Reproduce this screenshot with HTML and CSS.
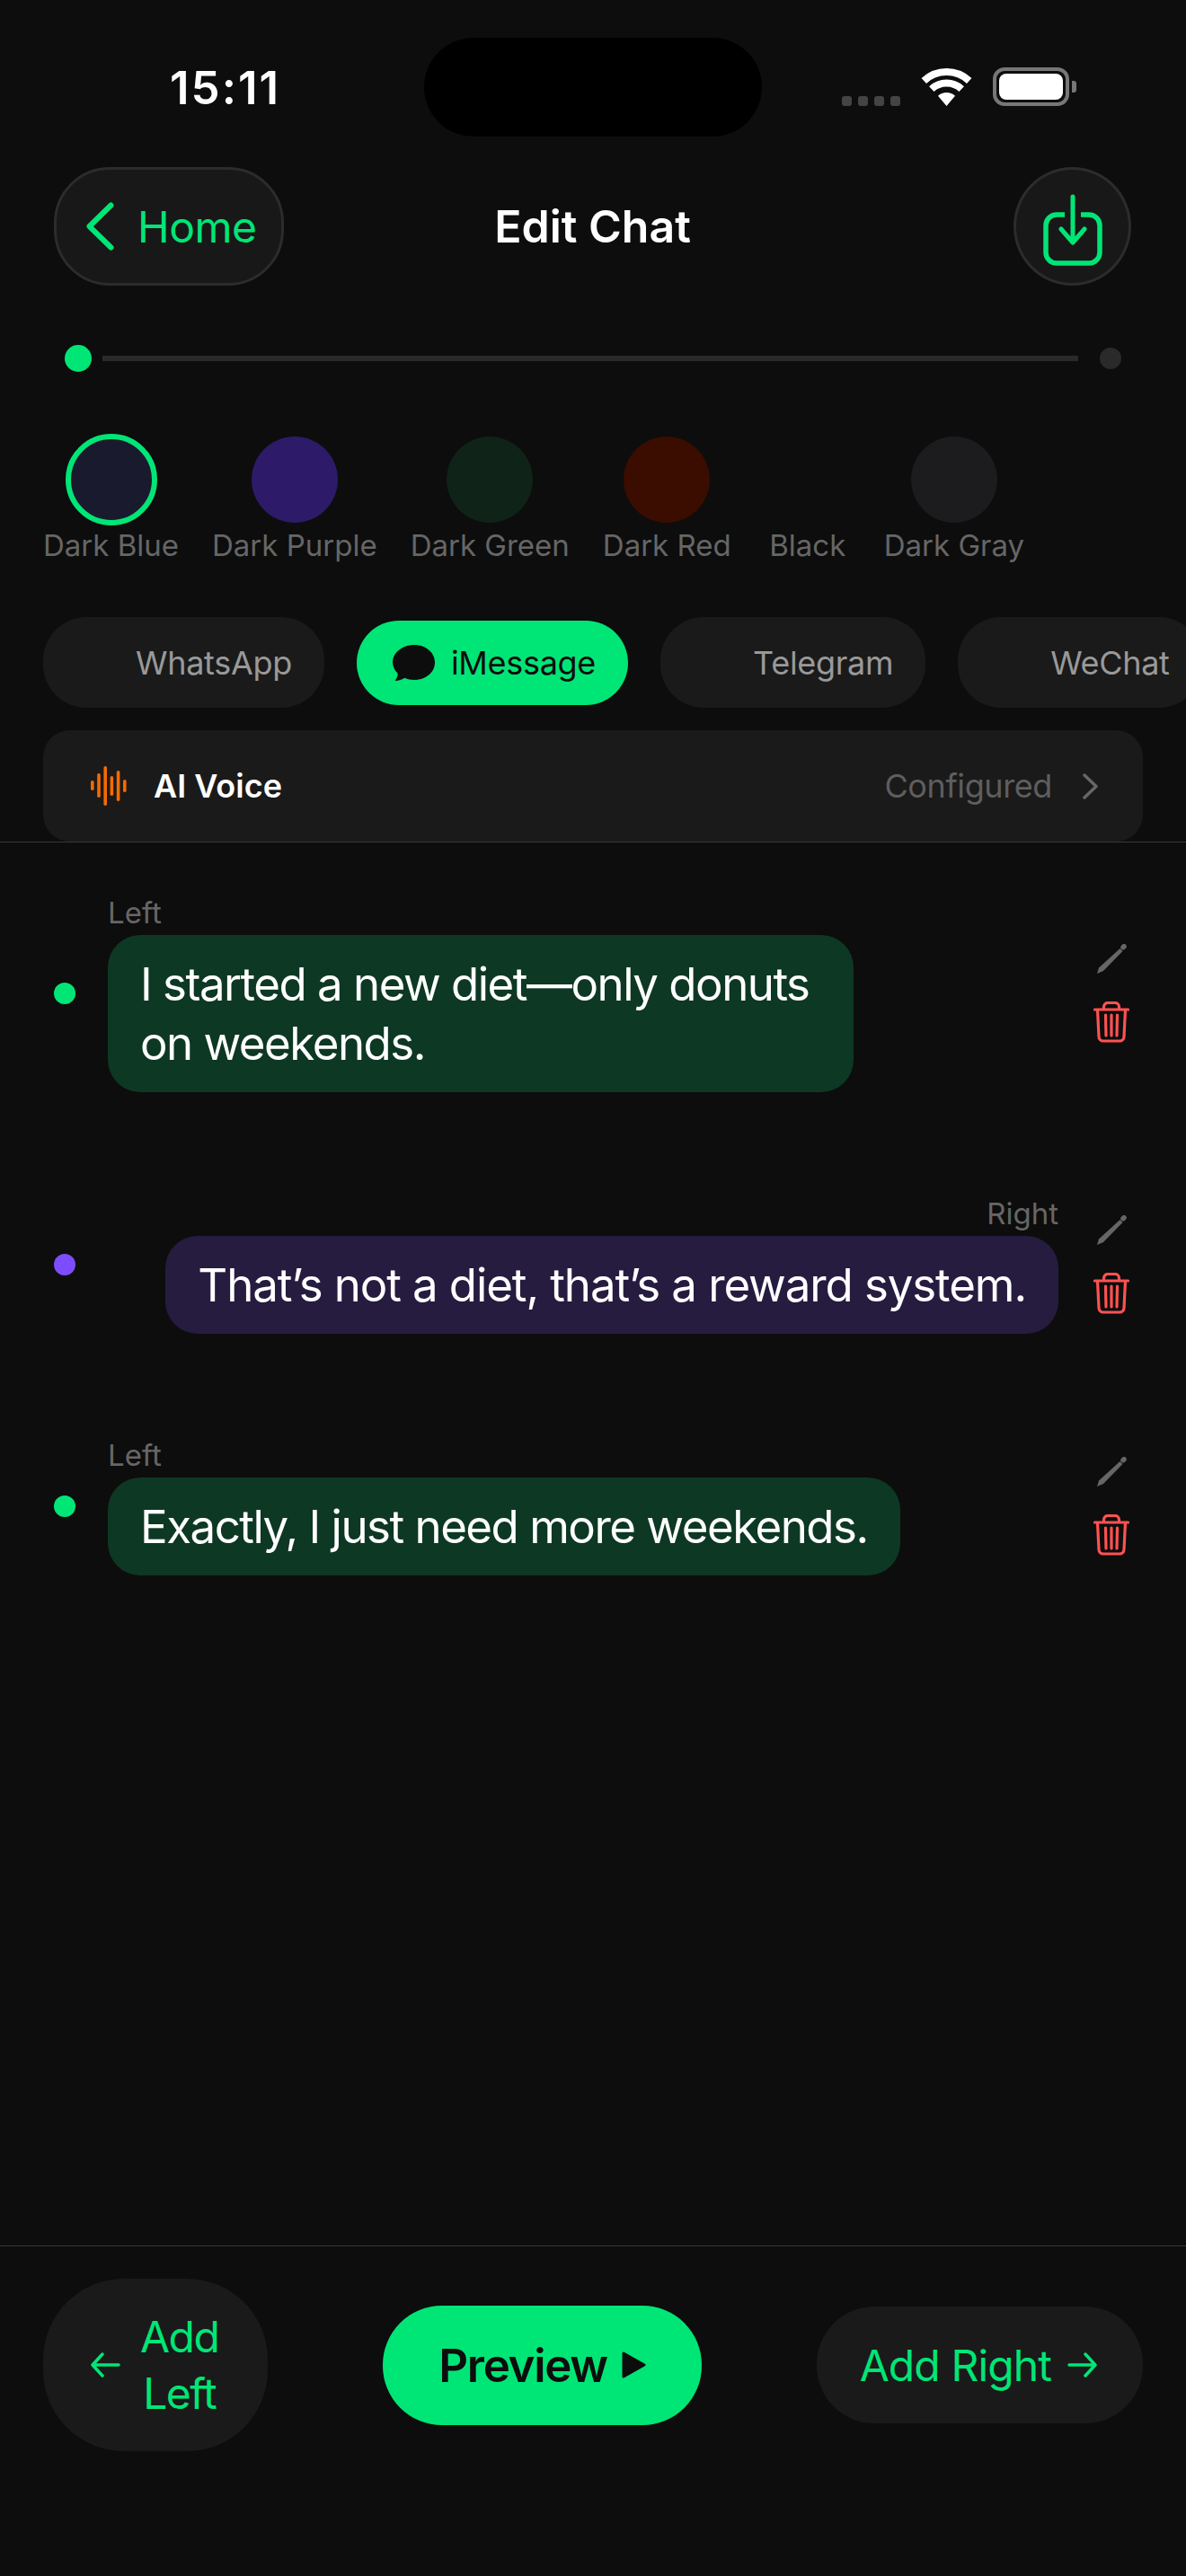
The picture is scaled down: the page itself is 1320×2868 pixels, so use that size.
FILE: index.html
```html
<!DOCTYPE HTML>
<html lang="en">
<head>
    <meta charset="UTF-8">
    <meta name="viewport" content="width=device-width, initial-scale=1.0">
    <title>Edit Chat</title>
    <link rel="stylesheet" href="styles.css">
</head>
<body>
<div class="page">
    <div class="island"></div>

    <div class="status">
        <span class="time">15:11</span>
        <div class="status-icons">
            <div class="signal"><i></i><i></i><i></i><i></i></div>
            <svg class="wifi" width="57" height="42" viewBox="0 0 57 42">
                <path d="M3.3 14 A37 37 0 0 1 53.7 14" fill="none" stroke="#fff" stroke-width="8"/>
                <path d="M11.8 23.1 A24.5 24.5 0 0 1 45.2 23.1" fill="none" stroke="#fff" stroke-width="8"/>
                <path d="M28.5 42 L19 30.8 A14 14 0 0 1 38 30.8 Z" fill="#fff"/>
            </svg>
            <div class="battery"><div class="battery-fill"></div></div>
            <div class="battery-cap"></div>
        </div>
    </div>

    <div class="header">
        <div class="home-btn">
            <svg width="32" height="54" viewBox="0 0 32 54">
                <path d="M27.5 3.5 L3.5 27 L27.5 50.5" fill="none" stroke="#00e676" stroke-width="6" stroke-linecap="round" stroke-linejoin="round"/>
            </svg>
            <span>Home</span>
        </div>
        <div class="title">Edit Chat</div>
        <div class="save-btn">
            <svg width="72" height="92" viewBox="0 -8 72 92">
                <path d="M27 25 H18 a12 12 0 0 0 -12 12 V67 a12 12 0 0 0 12 12 H54 a12 12 0 0 0 12 -12 V37 a12 12 0 0 0 -12 -12 H45" fill="none" stroke="#00e676" stroke-width="5.5"/>
                <path d="M36 5 V55 M23 41 L36 56 L49 41" fill="none" stroke="#00e676" stroke-width="5" stroke-linecap="round" stroke-linejoin="round"/>
            </svg>
        </div>
    </div>

    <div class="progress">
        <div class="step-on"></div>
        <div class="track"></div>
        <div class="step-off"></div>
    </div>

    <div class="swatches">
        <div class="swatch-item">
            <div class="swatch swatch-selected swatch-blue"></div>
            <span>Dark Blue</span>
        </div>
        <div class="swatch-item">
            <div class="swatch swatch-purple"></div>
            <span>Dark Purple</span>
        </div>
        <div class="swatch-item">
            <div class="swatch swatch-green"></div>
            <span>Dark Green</span>
        </div>
        <div class="swatch-item">
            <div class="swatch swatch-red"></div>
            <span>Dark Red</span>
        </div>
        <div class="swatch-item">
            <div class="swatch swatch-black"></div>
            <span>Black</span>
        </div>
        <div class="swatch-item">
            <div class="swatch swatch-gray"></div>
            <span>Dark Gray</span>
        </div>
    </div>

    <div class="tabs">
        <div class="tab">WhatsApp</div>
        <div class="tab tab-active">
            <svg width="47" height="40" viewBox="0 0 47 40">
                <path d="M24 0 C37 0 47 8.5 47 19.5 C47 30.5 37 39 24 39 C20 39 16.5 38.2 13.5 36.8 C10.5 38.8 7 40 2.5 40 C4.8 37.5 5.8 34.5 5.6 31.6 C2.2 28.2 0 24 0 19.5 C0 8.5 11 0 24 0 Z" fill="#0d0d0d"/>
            </svg>
            <span>iMessage</span>
        </div>
        <div class="tab">Telegram</div>
        <div class="tab">WeChat</div>
    </div>

    <div class="voice-wrap">
        <div class="voice">
            <svg class="voice-icon" width="40" height="44" viewBox="0 0 40 44">
                <rect x="0" y="16" width="3.6" height="11" rx="1.8"/>
                <rect x="7.2" y="8" width="3.6" height="27" rx="1.8"/>
                <rect x="14.4" y="0" width="3.6" height="44" rx="1.8"/>
                <rect x="21.6" y="11" width="3.6" height="22" rx="1.8"/>
                <rect x="28.8" y="5" width="3.6" height="34" rx="1.8"/>
                <rect x="36" y="15" width="3.6" height="14" rx="1.8"/>
            </svg>
            <span class="voice-name">AI Voice</span>
            <span class="voice-state">Configured</span>
            <svg width="17" height="29" viewBox="0 0 17 29">
                <path d="M2 2 L15 14.5 L2 27" fill="none" stroke="#666" stroke-width="3.5" stroke-linecap="round" stroke-linejoin="round"/>
            </svg>
        </div>
    </div>

    <div class="messages">
        <div class="msg">
            <div class="dot dot-green"></div>
            <div class="msg-body">
                <div class="msg-side">Left</div>
                <div class="bubble bubble-left bubble-wrapped">I started a new diet—only donuts on weekends.</div>
            </div>
            <div class="msg-actions">
                <svg width="33" height="33" viewBox="0 0 33 33">
                    <path d="M0 33 L2 26.5 L25.5 5 L28.5 8 L7 30 Z" fill="#666"/>
                    <path d="M29 3.7 L30 2.7" stroke="#666" stroke-width="5.5" stroke-linecap="round"/>
                </svg>
                <svg width="40" height="46" viewBox="0 0 40 46">
                    <path d="M1.5 9 H38.5 M11.5 9 V6 a4.5 4.5 0 0 1 4.5 -4.5 H24 a4.5 4.5 0 0 1 4.5 4.5 V9 M4.5 9 L6 39 a5 5 0 0 0 5 5 H29 a5 5 0 0 0 5 -5 L35.5 9 M13.5 15 L14 38 M20 15 V38 M26.5 15 L26 38" fill="none" stroke="#ff5252" stroke-width="3.2" stroke-linecap="round" stroke-linejoin="round"/>
                </svg>
            </div>
        </div>

        <div class="msg msg-right">
            <div class="dot dot-purple"></div>
            <div class="msg-body">
                <div class="msg-side">Right</div>
                <div class="bubble bubble-right">That’s not a diet, that’s a reward system.</div>
            </div>
            <div class="msg-actions">
                <svg width="33" height="33" viewBox="0 0 33 33">
                    <path d="M0 33 L2 26.5 L25.5 5 L28.5 8 L7 30 Z" fill="#666"/>
                    <path d="M29 3.7 L30 2.7" stroke="#666" stroke-width="5.5" stroke-linecap="round"/>
                </svg>
                <svg width="40" height="46" viewBox="0 0 40 46">
                    <path d="M1.5 9 H38.5 M11.5 9 V6 a4.5 4.5 0 0 1 4.5 -4.5 H24 a4.5 4.5 0 0 1 4.5 4.5 V9 M4.5 9 L6 39 a5 5 0 0 0 5 5 H29 a5 5 0 0 0 5 -5 L35.5 9 M13.5 15 L14 38 M20 15 V38 M26.5 15 L26 38" fill="none" stroke="#ff5252" stroke-width="3.2" stroke-linecap="round" stroke-linejoin="round"/>
                </svg>
            </div>
        </div>

        <div class="msg">
            <div class="dot dot-green"></div>
            <div class="msg-body">
                <div class="msg-side">Left</div>
                <div class="bubble bubble-left">Exactly, I just need more weekends.</div>
            </div>
            <div class="msg-actions">
                <svg width="33" height="33" viewBox="0 0 33 33">
                    <path d="M0 33 L2 26.5 L25.5 5 L28.5 8 L7 30 Z" fill="#666"/>
                    <path d="M29 3.7 L30 2.7" stroke="#666" stroke-width="5.5" stroke-linecap="round"/>
                </svg>
                <svg width="40" height="46" viewBox="0 0 40 46">
                    <path d="M1.5 9 H38.5 M11.5 9 V6 a4.5 4.5 0 0 1 4.5 -4.5 H24 a4.5 4.5 0 0 1 4.5 4.5 V9 M4.5 9 L6 39 a5 5 0 0 0 5 5 H29 a5 5 0 0 0 5 -5 L35.5 9 M13.5 15 L14 38 M20 15 V38 M26.5 15 L26 38" fill="none" stroke="#ff5252" stroke-width="3.2" stroke-linecap="round" stroke-linejoin="round"/>
                </svg>
            </div>
        </div>
    </div>

    <div class="footer">
        <div class="add-btn add-left">
            <svg width="34" height="28" viewBox="0 0 34 28">
                <path d="M32 14 H3 M14 2 L3 14 L14 26" fill="none" stroke="#00e676" stroke-width="3.5" stroke-linecap="round" stroke-linejoin="round"/>
            </svg>
            <span class="add-left-text">Add Left</span>
        </div>
        <div class="preview-btn">
            <span>Preview</span>
            <svg width="27" height="30" viewBox="0 0 27 30">
                <path d="M2 2 L25 15 L2 28 Z" fill="#0d0d0d" stroke="#0d0d0d" stroke-width="3" stroke-linejoin="round"/>
            </svg>
        </div>
        <div class="add-btn add-right">
            <span>Add Right</span>
            <svg width="34" height="28" viewBox="0 0 34 28">
                <path d="M2 14 H31 M20 2 L31 14 L20 26" fill="none" stroke="#00e676" stroke-width="3.5" stroke-linecap="round" stroke-linejoin="round"/>
            </svg>
        </div>
    </div>
</div>
</body>
</html>
```

FILE: styles.css
```css
* {
    box-sizing: border-box;
}

body {
    margin: 0;
    background-color: #0d0d0d;
    color: #fff;
    font-family: Inter, "Liberation Sans", sans-serif;
}

.page {
    position: relative;
    width: 1320px;
    height: 2868px;
    overflow: hidden;
    display: flex;
    flex-direction: column;
}

/* status bar */
.island {
    position: absolute;
    top: 42px;
    left: 472px;
    width: 376px;
    height: 110px;
    border-radius: 55px;
    background-color: #000;
}

.status {
    height: 186px;
    padding: 68px 122px 0 189px;
    display: flex;
    justify-content: space-between;
    align-items: flex-start;
}

.time {
    font-size: 51px;
    line-height: 60px;
    font-weight: 600;
    letter-spacing: 2px;
}

.status-icons {
    margin-top: 7px;
    display: flex;
    align-items: flex-end;
}

.signal {
    display: flex;
    gap: 7px;
    margin-right: 23px;
}

.signal i {
    display: block;
    width: 11px;
    height: 11px;
    border-radius: 3px;
    background-color: #444;
}

.battery {
    margin-left: 23px;
    width: 85px;
    height: 43px;
    padding: 3px;
    border: 4px solid #777;
    border-radius: 13px;
}

.battery-fill {
    height: 100%;
    border-radius: 8px;
    background-color: #fff;
}

.battery-cap {
    width: 5px;
    height: 13px;
    margin: 0 0 15px 3px;
    border-radius: 0 3px 3px 0;
    background-color: #777;
}

/* header */
.header {
    padding: 0 61px 0 60px;
    display: grid;
    grid-template-columns: 1fr auto 1fr;
    align-items: center;
}

.home-btn {
    justify-self: start;
    width: 256px;
    height: 132px;
    padding-left: 33px;
    display: flex;
    align-items: center;
    gap: 25px;
    background-color: #181818;
    border: 3px solid #2c2c2c;
    border-radius: 62px;
    color: #00e676;
    font-size: 48px;
    letter-spacing: -0.5px;
}

.title {
    font-size: 50px;
    font-weight: 600;
}

.save-btn {
    justify-self: end;
    width: 131px;
    height: 132px;
    display: flex;
    align-items: center;
    justify-content: center;
    background-color: #181818;
    border: 3px solid #2c2c2c;
    border-radius: 50%;
}

/* progress */
.progress {
    margin-top: 66px;
    padding: 0 72px;
    display: flex;
    align-items: center;
    gap: 12px;
}

.step-on {
    width: 30px;
    height: 30px;
    border-radius: 50%;
    background-color: #00e676;
}

.track {
    flex: 1;
    height: 6px;
    background-color: #2a2a2a;
}

.step-off {
    width: 24px;
    height: 24px;
    margin-left: 12px;
    border-radius: 50%;
    background-color: #2a2a2a;
}

/* colour swatches */
.swatches {
    margin-top: 69px;
    padding-left: 48px;
    display: flex;
    gap: 37px;
}

.swatch-item {
    display: flex;
    flex-direction: column;
    align-items: center;
    font-size: 33px;
    line-height: 40px;
    color: #666;
}

.swatch {
    width: 96px;
    height: 96px;
    margin: 3px 0 5px;
    border-radius: 50%;
}

.swatch-selected {
    width: 102px;
    height: 102px;
    margin: 0 0 2px;
    border: 6px solid #00e676;
}

.swatch-blue { background-color: #1a1a2e; }
.swatch-purple { background-color: #2d1b69; }
.swatch-green { background-color: #0f2318; }
.swatch-red { background-color: #3a0d00; }
.swatch-black { background-color: #0d0d0d; }
.swatch-gray { background-color: #1c1c1e; }

/* platform tabs */
.tabs {
    margin-top: 60px;
    height: 101px;
    padding-left: 48px;
    display: flex;
    align-items: center;
    gap: 36px;
    overflow: hidden;
}

.tab {
    flex-shrink: 0;
    height: 101px;
    padding: 0 36px 0 103px;
    display: flex;
    align-items: center;
    background-color: #1a1a1a;
    border-radius: 48px;
    color: #999;
    font-size: 36px;
    letter-spacing: -0.3px;
}

.tab-active {
    height: 94px;
    padding-left: 40px;
    gap: 18px;
    background-color: #00e676;
    color: #0d0d0d;
}

/* ai voice row */
.voice-wrap {
    padding: 25px 48px 0;
    border-bottom: 1px solid #383838;
}

.voice {
    height: 124px;
    padding: 0 50px 0 53px;
    display: flex;
    align-items: center;
    background-color: #1a1a1a;
    border-radius: 30px;
}

.voice-icon {
    fill: #f56a00;
    margin-right: 30px;
}

.voice-name {
    font-size: 36px;
    font-weight: 600;
}

.voice-state {
    margin-left: auto;
    margin-right: 34px;
    font-size: 36px;
    letter-spacing: -0.4px;
    color: #5e5e5e;
}

/* messages */
.messages {
    flex: 1;
    padding: 58px 60px 0;
    display: flex;
    flex-direction: column;
    gap: 115px;
}

.msg {
    display: flex;
    align-items: center;
    gap: 36px;
}

.dot {
    flex-shrink: 0;
    width: 24px;
    height: 24px;
    border-radius: 50%;
}

.dot-green { background-color: #00e676; }
.dot-purple { background-color: #7c4dff; }

.msg-body {
    flex: 1;
    display: flex;
    flex-direction: column;
    align-items: flex-start;
    gap: 5px;
}

.msg-right .msg-body {
    align-items: flex-end;
}

.msg-side {
    font-size: 33px;
    line-height: 40px;
    color: #666;
}

.bubble {
    padding: 21.5px 36px;
    border-radius: 36px;
    font-size: 51px;
    line-height: 66px;
    letter-spacing: -1.1px;
}

.bubble-left {
    background-color: #0d3824;
    letter-spacing: -1.5px;
}

.bubble-right { background-color: #261c40; }

.bubble-wrapped {
    width: 830px;
}

.msg-actions {
    flex-shrink: 0;
    width: 46px;
    display: flex;
    flex-direction: column;
    align-items: center;
    gap: 31px;
}

/* footer */
.footer {
    padding: 36px 48px 139px;
    display: flex;
    justify-content: space-between;
    align-items: center;
    border-top: 1px solid #383838;
}

.add-btn {
    display: flex;
    align-items: center;
    background-color: #1a1a1a;
    color: #00e676;
    font-size: 48px;
    line-height: 63px;
    letter-spacing: -0.9px;
}

.add-left {
    height: 192px;
    padding: 0 55px 0 52px;
    gap: 22px;
    border-radius: 90px;
}

.add-left-text {
    width: min-content;
    text-align: center;
    letter-spacing: -1.5px;
}

.add-right {
    height: 130px;
    padding: 0 50px 0 48px;
    gap: 18px;
    border-radius: 64px;
}

.preview-btn {
    height: 133px;
    padding: 0 62px;
    display: flex;
    align-items: center;
    gap: 16px;
    background-color: #00e676;
    border-radius: 66px;
    color: #0d0d0d;
    font-size: 51px;
    font-weight: 600;
    letter-spacing: -1.3px;
}
```
